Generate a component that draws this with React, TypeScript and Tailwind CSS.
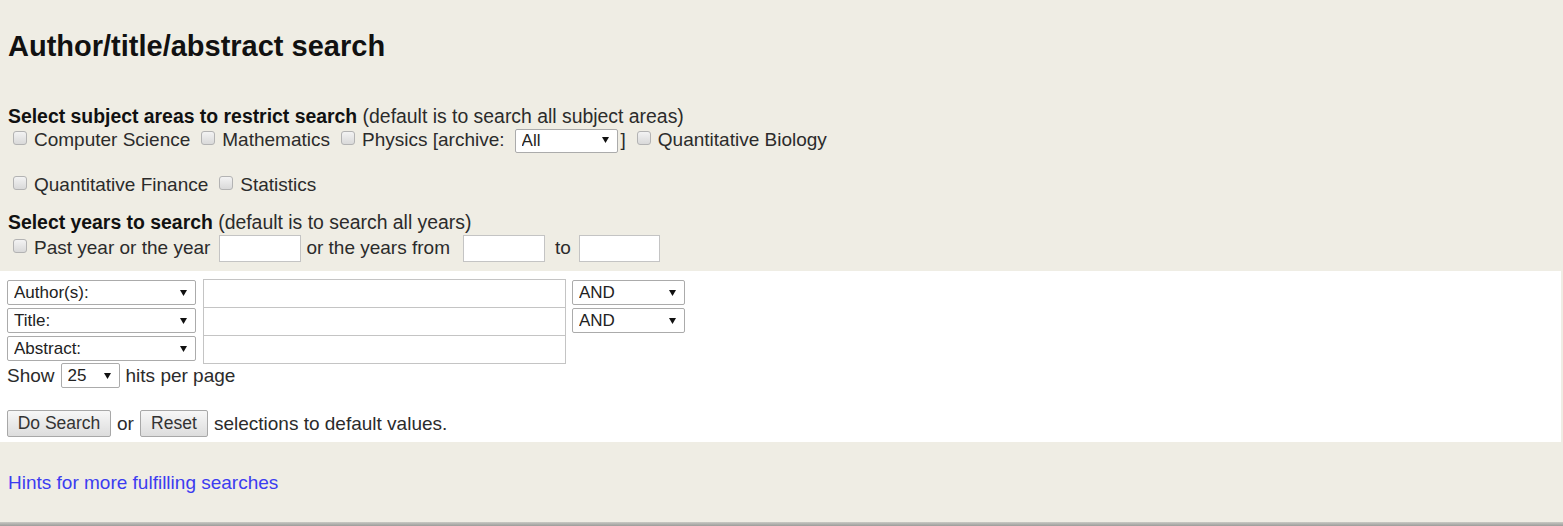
import React from "react";

const FONT = "font-['Liberation_Sans',Arial,Helvetica,sans-serif]";

function Check() {
  return (
    <input
      type="checkbox"
      className="appearance-none shrink-0 w-[14px] h-[14px] rounded-[3px] border border-[#b3b3b3] bg-linear-to-b from-[#f3f3f3] to-[#d9d9d9] -translate-y-[2px]"
    />
  );
}

function CheckItem({ label, first }: { label: string; first?: boolean }) {
  return (
    <span className={`flex items-center ${first ? "ml-[5px]" : "ml-[11px]"}`}>
      <Check />
      <span className="ml-[7px] whitespace-nowrap">{label}</span>
    </span>
  );
}

function Dropdown({ value, className }: { value: string; className: string }) {
  return (
    <div className={`relative shrink-0 ${className}`}>
      <select
        defaultValue={value}
        className="appearance-none w-full h-full bg-white border border-[#ababab] rounded-[2px] pl-[6px] text-[17px] leading-none text-[#222] outline-none"
      >
        <option>{value}</option>
      </select>
      <svg
        className="absolute right-[9px] top-1/2 -translate-y-1/2 pointer-events-none"
        width="7"
        height="6"
        viewBox="0 0 7 6"
      >
        <polygon points="0,0 7,0 3.5,6" fill="#111" />
      </svg>
    </div>
  );
}

function TextBox({ className }: { className: string }) {
  return <input type="text" className={`shrink-0 bg-white border border-[#c4c4c4] outline-none ${className}`} />;
}

function Btn({ label, className }: { label: string; className: string }) {
  return (
    <button
      className={`h-[27px] rounded-[2px] border border-[#a8a8a8] bg-linear-to-b from-[#f7f7f7] to-[#dddddd] text-[17.5px] leading-none text-[#333] ${className}`}
    >
      {label}
    </button>
  );
}

export default function App() {
  return (
    <div className={`min-h-[526px] flex flex-col bg-[#efede4] ${FONT} text-[19px] leading-[24px] text-[#2b2b2b]`}>
      <h1 className="pl-2 pt-[29px] text-[29px] leading-[34px] font-bold text-[#111]">Author/title/abstract search</h1>

      {/* Subject areas */}
      <div className="pl-2 mt-[41px] whitespace-nowrap text-[19.4px]">
        <b className="text-[#111]">Select subject areas to restrict search</b> (default is to search all subject areas)
      </div>
      <div className="flex items-center h-[24px] pl-2">
        <CheckItem label="Computer Science" first />
        <CheckItem label="Mathematics" />
        <CheckItem label="Physics [archive:" />
        <Dropdown value="All" className="w-[103px] h-[24px] ml-[10px]" />
        <span className="ml-[3px]">]</span>
        <CheckItem label="Quantitative Biology" />
      </div>
      <div className="flex items-center h-[24px] pl-2 mt-[21px]">
        <CheckItem label="Quantitative Finance" first />
        <CheckItem label="Statistics" />
      </div>

      {/* Years */}
      <div className="pl-2 mt-[13px] whitespace-nowrap text-[19.4px]">
        <b className="text-[#111]">Select years to search</b> (default is to search all years)
      </div>
      <div className="flex items-center h-[26px] pl-2 mt-px">
        <CheckItem label="Past year or the year" first />
        <TextBox className="w-[82px] h-[27px] ml-[9px]" />
        <span className="ml-[5px] whitespace-nowrap">or the years from</span>
        <TextBox className="w-[82px] h-[27px] ml-[13px]" />
        <span className="ml-[10px]">to</span>
        <TextBox className="w-[81px] h-[27px] ml-[8px]" />
      </div>

      {/* Search fields */}
      <div className="mt-[10px] mr-[2px] bg-white px-[7px] pt-[8px] pb-[5px]">
        {[
          { field: "Author(s):", op: true },
          { field: "Title:", op: true },
          { field: "Abstract:", op: false },
        ].map((row) => (
          <div key={row.field} className="flex items-start h-[28px]">
            <Dropdown value={row.field} className="w-[189px] h-[25px] mt-px" />
            <TextBox className="w-[363px] h-[29px] ml-[7px] border-[#b9b9b9]" />
            {row.op && <Dropdown value="AND" className="w-[113px] h-[25px] mt-px ml-[6px]" />}
          </div>
        ))}
        <div className="flex items-center h-[25px]">
          <span>Show</span>
          <Dropdown value="25" className="w-[59px] h-[25px] ml-[6px]" />
          <span className="ml-[6px]">hits per page</span>
        </div>
        <div className="flex items-center mt-[22px]">
          <Btn label="Do Search" className="w-[104px]" />
          <span className="ml-[6px]">or</span>
          <Btn label="Reset" className="w-[68px] ml-[6px]" />
          <span className="ml-[6px]">selections to default values.</span>
        </div>
      </div>

      <div className="pl-2 mt-[29px]">
        <a href="#" className="text-[#3c3cf0]">Hints for more fulfilling searches</a>
      </div>

      <div className="mt-auto h-[4px] bg-linear-to-b from-[#c9c9c4] to-[#9c9c9a]" />
    </div>
  );
}
